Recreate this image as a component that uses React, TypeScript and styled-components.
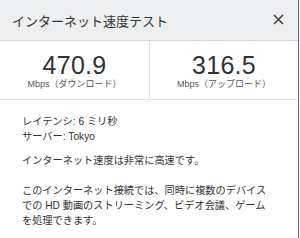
import * as React from 'react';
import styled, { createGlobalStyle } from 'styled-components';

const GlobalStyle = createGlobalStyle`
  html, body {
    margin: 0;
    padding: 0;
    background: #ffffff;
  }
  body {
    font-family: "Liberation Sans", "Noto Sans CJK JP", sans-serif;
    color: #333333;
  }
`;

const Panel = styled.div`
  width: 298px;
  height: 238px;
  border-right: 1px solid #5f6368;
  background: #ffffff;
  overflow: hidden;
`;

const Header = styled.div`
  height: 40px;
  display: flex;
  align-items: center;
  justify-content: space-between;
  padding: 0 13px 0 12px;
  background: #eeeff1;
  border-bottom: 1px solid #d5d6d8;
`;

const Title = styled.div`
  font-size: 13px;
  color: #333333;
  margin-top: 1px;
`;

const Close = styled.button`
  display: flex;
  align-items: center;
  justify-content: center;
  width: 14px;
  height: 14px;
  padding: 0;
  margin-top: -2px;
  border: none;
  background: none;
  cursor: pointer;
`;

const Stats = styled.div`
  display: grid;
  grid-template-columns: 149px 1fr;
  height: 58px;
  border-bottom: 1px solid #e3e3e3;
`;

const Stat = styled.div<{ $divider?: boolean }>`
  display: flex;
  flex-direction: column;
  align-items: center;
  justify-content: center;
  border-left: ${(p) => (p.$divider ? '1px solid #e3e3e3' : 'none')};
  padding-top: 2px;
`;

const Value = styled.div`
  font-size: 25px;
  line-height: 26px;
  letter-spacing: 0.3px;
  color: #333333;
`;

const Unit = styled.div`
  font-size: 9px;
  line-height: 12px;
  color: #555555;
`;

const Body = styled.div`
  width: 252px;
  padding: 14px 0 0 22px;
  font-size: 10.2px;
  line-height: 15px;
  color: #333333;
`;

const Line = styled.div``;

const Summary = styled.p`
  margin: 9px 0 0;
`;

const Detail = styled.p`
  margin: 15px 0 0;
`;

const stats = [
  { value: '470.9', label: 'Mbps（ダウンロード）' },
  { value: '316.5', label: 'Mbps（アップロード）' },
];

export default function App() {
  return (
    <>
      <GlobalStyle />
      <Panel>
        <Header>
          <Title>インターネット速度テスト</Title>
          <Close aria-label="閉じる">
            <svg width="11" height="11" viewBox="0 0 11 11">
              <path d="M1 1 L10 10 M10 1 L1 10" stroke="#444" strokeWidth="1.6" />
            </svg>
          </Close>
        </Header>
        <Stats>
          {stats.map((s, i) => (
            <Stat key={s.label} $divider={i > 0}>
              <Value>{s.value}</Value>
              <Unit>{s.label}</Unit>
            </Stat>
          ))}
        </Stats>
        <Body>
          <Line>レイテンシ: 6 ミリ秒</Line>
          <Line>サーバー: Tokyo</Line>
          <Summary>インターネット速度は非常に高速です。</Summary>
          <Detail>
            このインターネット接続では、同時に複数のデバイスでの HD
            動画のストリーミング、ビデオ会議、ゲームを処理できます。
          </Detail>
        </Body>
      </Panel>
    </>
  );
}
